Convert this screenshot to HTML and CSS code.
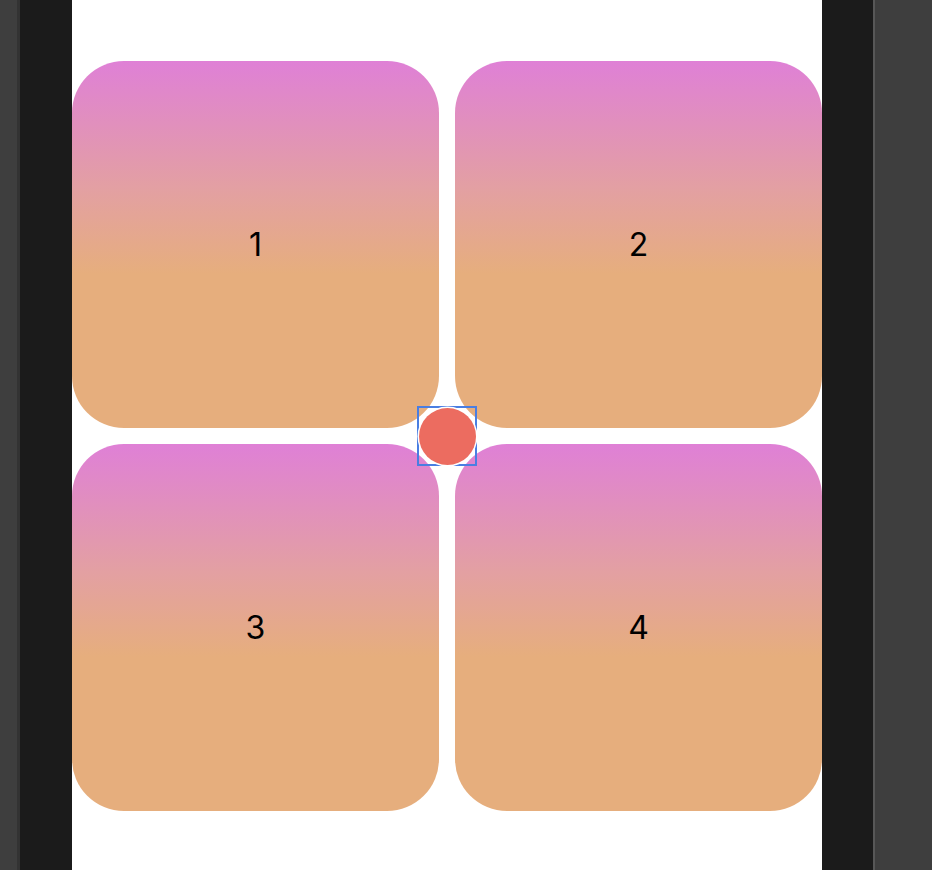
FILE: index.html
```html
<!DOCTYPE html>
<html>
<head>
<meta charset="utf-8">
<link rel="stylesheet" href="styles.css">
</head>
<body>
<div class="frame">
  <div class="side-left"></div>
  <div class="bezel"></div>
  <div class="screen">
    <div class="grid">
      <div class="card">1</div>
      <div class="card">2</div>
      <div class="card">3</div>
      <div class="card">4</div>
    </div>
    <div class="handle"><div class="dot"></div></div>
  </div>
  <div class="bezel bezel-right"></div>
  <div class="side-right"></div>
</div>
</body>
</html>
```
FILE: styles.css
```css
html, body {
  margin: 0;
  padding: 0;
  height: 100%;
  background: #3e3e3e;
}
.frame {
  display: flex;
  height: 870px;
  width: 932px;
}
.side-left {
  width: 17px;
  background: #3e3e3e;
  border-right: 3px solid #333333;
}
.bezel {
  width: 52px;
  background: #1b1b1b;
}
.bezel-right {
  width: 51px;
}
.side-right {
  flex: 1;
  background: #3e3e3e;
  border-left: 2px solid #575757;
}
.screen {
  width: 750px;
  background: #ffffff;
  position: relative;
}
.grid {
  display: grid;
  grid-template-columns: 367px 367px;
  grid-template-rows: 367px 367px;
  gap: 16px;
  padding-top: 61px;
}
.card {
  border-radius: 52px;
  background: linear-gradient(to bottom, #df80d6 0%, #e3a0a2 35%, #e6ae7d 58%, #e6ae7d 100%);
  display: flex;
  align-items: center;
  justify-content: center;
  font-family: Inter, "Liberation Sans", sans-serif;
  font-size: 32px;
  color: #000;
}
.handle {
  position: absolute;
  left: 345px;
  top: 406px;
  width: 56px;
  height: 56px;
  border: 2px solid #4a7ee2;
  display: flex;
  align-items: center;
  justify-content: center;
}
.dot {
  flex: none;
  width: 57px;
  height: 57px;
  border-radius: 50%;
  background: #ec6c60;
  box-shadow: 0 0 0 1.5px #ffffff;
}
```
